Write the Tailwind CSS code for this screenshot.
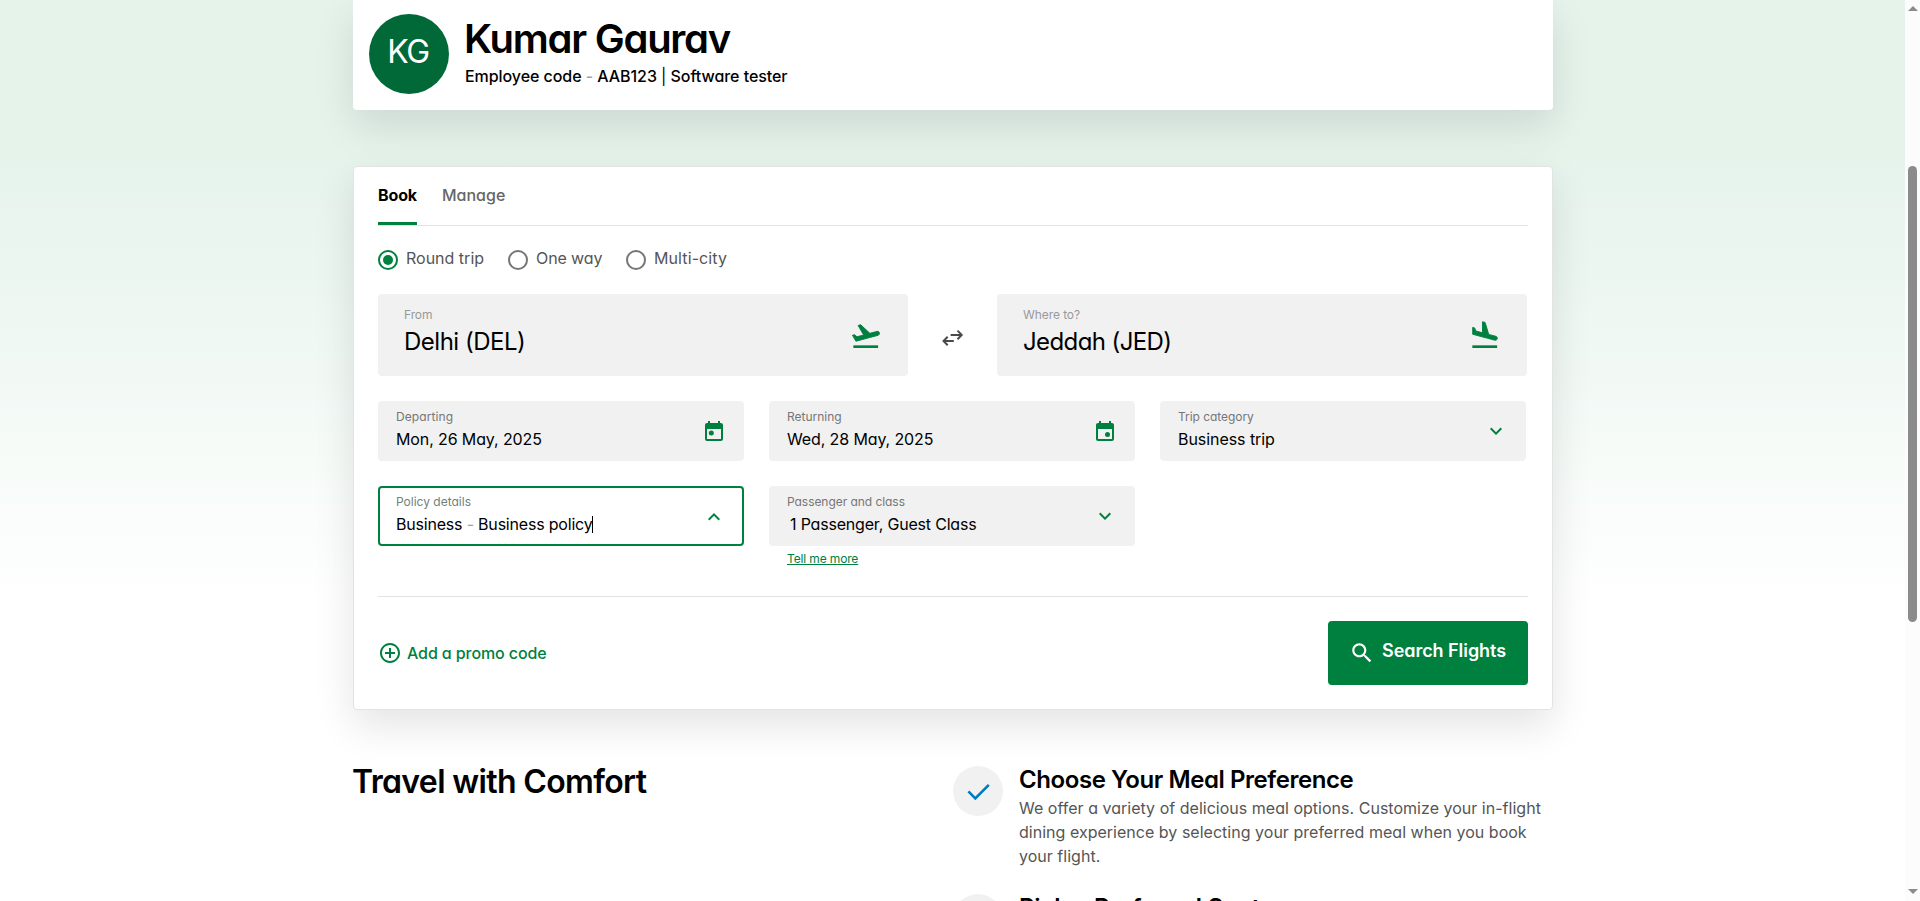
<!DOCTYPE html>
<html lang="en">
<head>
<meta charset="utf-8">
<title>Book a flight</title>
<script src="https://cdn.jsdelivr.net/npm/@tailwindcss/browser@4"></script>
</head>
<body class="h-[901px] overflow-hidden bg-white font-['Inter',sans-serif] [font-feature-settings:'cv11'] text-base text-black">
<div class="flex h-[901px] overflow-hidden">
  <main class="h-[901px] flex-1 overflow-hidden bg-[linear-gradient(180deg,#e5f3eb_0px,#e5f3eb_150px,#ffffff_610px)] pl-[353px]">
    <!-- Profile -->
    <header class="flex h-[110px] w-[1200px] gap-4 rounded-b bg-white pt-3.5 pl-4 shadow-[0_16px_40px_rgba(0,0,0,0.11)]">
      <div class="flex size-20 items-center justify-center rounded-full bg-[#006937] pr-0.5 pb-[5px] text-[32px] leading-10 tracking-[-1.4px] text-white">KG</div>
      <div>
        <h1 class="-ml-px pt-px text-[40px] leading-[48px] font-semibold tracking-[-1.25px] whitespace-nowrap">Kumar Gaurav</h1>
        <p class="mt-px font-medium tracking-[-0.06px]">Employee code <span class="text-neutral-400">-</span> AAB123 <span class="font-normal">|</span> Software tester</p>
      </div>
    </header>

    <!-- Booking card -->
    <section class="mt-14 h-[544px] w-[1200px] rounded border border-[#e2e4e3] bg-white px-6 shadow-[0_16px_40px_rgba(0,0,0,0.11)]">
      <nav class="flex h-[59px] gap-[25px] border-b border-[#e2e2e2] pt-4">
        <span class="h-[42px] w-[39px] border-b-[3px] border-[#00803e] font-bold tracking-[-0.12px]">Book</span>
        <span class="font-medium text-[#666]">Manage</span>
      </nav>

      <div class="flex h-[68px] pt-6 text-[#555]">
        <span class="flex w-[130px] gap-2"><span class="flex size-5 items-center justify-center rounded-full border-2 border-[#00803e]"><span class="size-2.5 rounded-full bg-[#00803e]"></span></span><span class="-mt-1">Round trip</span></span>
        <span class="flex w-[118px] gap-2"><span class="size-5 rounded-full border-2 border-[#767676]"></span><span class="-mt-1 tracking-[-0.1px]">One way</span></span>
        <span class="flex gap-2"><span class="size-5 rounded-full border-2 border-[#767676]"></span><span class="-mt-1 tracking-[0.1px]">Multi-city</span></span>
      </div>

      <div class="flex">
        <div class="flex h-[82px] w-[530px] justify-between rounded bg-[#f1f1f1] pt-[13px] pr-[26px] pl-[26px]">
          <div>
            <div class="text-xs leading-4 tracking-[-0.1px] text-[#999]">From</div>
            <div class="mt-[3px] text-2xl leading-8 tracking-[-0.5px]">Delhi (DEL)</div>
          </div>
          <svg class="mt-[13px] size-8 fill-[#00803e]" viewBox="0 0 24 24"><path d="M2.5 19h18.6v2H2.5z"/><path stroke="#00803e" stroke-width=".7" d="M22.07 9.64c-.21-.8-1.04-1.28-1.84-1.06L14.92 10l-6.9-6.43-1.93.51 4.14 7.17-4.97 1.33-1.97-1.54-1.45.39 1.82 3.16.77 1.33 1.6-.43 5.31-1.42 4.35-1.16L21 11.49c.81-.23 1.28-1.05 1.07-1.85z"/></svg>
        </div>
        <div class="flex w-[89px] justify-center pt-8">
          <svg class="h-6 w-6" viewBox="0 0 24 24" fill="none" stroke="#4a4a4a" stroke-width="2"><path d="M9.6 8.9h10.6M16.5 4.6l4.2 4.3-4.2 4.3M12.8 15H3M6.7 10.7 2.5 15l4.2 4.3"/></svg>
        </div>
        <div class="flex h-[82px] w-[530px] justify-between rounded bg-[#f1f1f1] pt-[13px] pr-[26px] pl-[26px]">
          <div>
            <div class="text-xs leading-4 tracking-[-0.08px] text-[#999]">Where to?</div>
            <div class="mt-[3px] text-2xl leading-8 tracking-[-0.6px]">Jeddah (JED)</div>
          </div>
          <svg class="mt-[13px] size-8 fill-[#00803e]" viewBox="0 0 24 24"><path d="M2.5 19h18.6v2H2.5z"/><path transform="translate(0 -.7)" stroke="#00803e" stroke-width=".7" d="M9.68 13.27l4.35 1.16 5.31 1.42c.8.21 1.62-.26 1.84-1.06.21-.8-.26-1.62-1.06-1.84l-5.31-1.42-2.76-9.02L10.12 2v8.28L5.15 8.95l-.93-2.32-1.45-.39v5.17l1.6.43 5.31 1.43z"/></svg>
        </div>
      </div>

      <div class="mt-[25px] grid grid-cols-[366px_366px_366px] gap-[25px]">
        <div class="flex h-[60px] justify-between rounded bg-[#f1f1f1] pt-2 pr-[18px] pl-[18px]">
          <div>
            <div class="text-xs leading-4 tracking-[0.1px] text-[#767676]">Departing</div>
            <div class="mt-0.5 leading-6 tracking-[-0.12px]">Mon, 26 May, 2025</div>
          </div>
          <svg class="mt-[11px] size-6 fill-[#00803e]" viewBox="0 0 24 24"><path d="M19 3h-1V1h-2v2H8V1H6v2H5c-1.11 0-1.99.9-1.99 2L3 19c0 1.1.89 2 2 2h14c1.1 0 2-.9 2-2V5c0-1.1-.9-2-2-2zm0 16H5V9h14v10z"/><circle cx="9.3" cy="13" r="2.5"/></svg>
        </div>
        <div class="flex h-[60px] justify-between rounded bg-[#f1f1f1] pt-2 pr-[18px] pl-[18px]">
          <div>
            <div class="text-xs leading-4 text-[#767676]">Returning</div>
            <div class="mt-0.5 leading-6 tracking-[-0.12px]">Wed, 28 May, 2025</div>
          </div>
          <svg class="mt-[11px] size-6 fill-[#00803e]" viewBox="0 0 24 24"><path d="M19 3h-1V1h-2v2H8V1H6v2H5c-1.11 0-1.99.9-1.99 2L3 19c0 1.1.89 2 2 2h14c1.1 0 2-.9 2-2V5c0-1.1-.9-2-2-2zm0 16H5V9h14v10z"/><circle cx="14.5" cy="14.5" r="2.5"/></svg>
        </div>
        <div class="flex h-[60px] justify-between rounded bg-[#f1f1f1] pt-2 pr-[18px] pl-[18px]">
          <div>
            <div class="text-xs leading-4 tracking-[-0.05px] text-[#767676]">Trip category</div>
            <div class="mt-0.5 leading-6 tracking-[-0.06px]">Business trip</div>
          </div>
          <svg class="mt-2.5 size-6 fill-[#00803e]" viewBox="0 0 24 24"><path d="M16.59 8.59 12 13.17 7.41 8.59 6 10l6 6 6-6z"/></svg>
        </div>

        <div class="flex h-[60px] justify-between rounded border-2 border-[#00803e] bg-white pt-1.5 pr-4 pl-4">
          <div>
            <div class="text-xs leading-4 text-[#6f8279]">Policy details</div>
            <div class="mt-0.5 flex items-center leading-6 tracking-[-0.2px] whitespace-pre">Business <span class="text-neutral-400">-</span> Business policy<span class="h-[17px] w-px bg-black"></span></div>
          </div>
          <svg class="mt-[11px] size-6 fill-[#00803e]" viewBox="0 0 24 24"><path d="m12 8-6 6 1.41 1.41L12 10.83l4.59 4.58L18 14z"/></svg>
        </div>
        <div>
          <div class="flex h-[60px] justify-between rounded bg-[#f1f1f1] pt-2 pr-[18px] pl-[18px]">
            <div>
              <div class="text-xs leading-4 tracking-[-0.05px] text-[#767676]">Passenger and class</div>
              <div class="mt-0.5 pl-[3px] leading-6 tracking-[-0.19px]">1 Passenger, Guest Class</div>
            </div>
            <svg class="mt-2.5 size-6 fill-[#00803e]" viewBox="0 0 24 24"><path d="M16.59 8.59 12 13.17 7.41 8.59 6 10l6 6 6-6z"/></svg>
          </div>
          <a class="mt-[5px] ml-[18px] block text-xs leading-4 tracking-[-0.14px] text-[#00803e] underline">Tell me more</a>
        </div>
      </div>

      <div class="mt-[29px] flex justify-between border-t border-[#e2e2e2] pt-6">
        <div class="flex gap-[5px] pt-5 font-medium tracking-[-0.1px] text-[#00803e]">
          <svg class="size-6 fill-[#00803e]" viewBox="0 0 24 24"><path d="M13 7h-2v4H7v2h4v4h2v-4h4v-2h-4V7zm-1-5C6.48 2 2 6.48 2 12s4.48 10 10 10 10-4.48 10-10S17.52 2 12 2zm0 18c-4.41 0-8-3.59-8-8s3.59-8 8-8 8 3.59 8 8-3.59 8-8 8z"/></svg>
          <span>Add a promo code</span>
        </div>
        <button class="flex h-16 w-[200px] gap-[7px] rounded bg-[#00803e] pt-[19px] pl-[21px] text-lg leading-6 font-semibold text-white">
          <svg class="size-[26px] fill-white" viewBox="0 0 24 24"><path d="M15.5 14h-.79l-.28-.27C15.41 12.59 16 11.11 16 9.5 16 5.91 13.09 3 9.5 3S3 5.91 3 9.5 5.91 16 9.5 16c1.61 0 3.09-.59 4.23-1.57l.27.28v.79l5 4.99L20.49 19l-4.99-5zm-6 0C7.01 14 5 11.99 5 9.5S7.01 5 9.5 5 14 7.01 14 9.5 11.99 14 9.5 14z"/></svg>
          <span class="-mt-px tracking-[-0.05px] whitespace-nowrap">Search Flights</span>
        </button>
      </div>
    </section>

    <!-- Benefits -->
    <section class="mt-[52px] flex w-[1200px]">
      <h2 class="-ml-px w-[601px] text-[32px] leading-10 font-semibold tracking-[-0.65px]">Travel with Comfort</h2>
      <div class="flex flex-col pt-0.5">
        <div class="flex h-32 gap-4">
          <div class="mt-0.5 flex size-[50px] shrink-0 items-center justify-center rounded-full bg-[#f1f1f1]">
            <svg class="h-[50px] w-[50px]" viewBox="0 0 50 50" fill="none" stroke="#007ac2" stroke-width="2.6"><path d="m15.4 25.4 6.9 6.9L35.8 18.8"/></svg>
          </div>
          <div>
            <h3 class="text-2xl leading-8 font-semibold tracking-[-0.43px]">Choose Your Meal Preference</h3>
            <p class="leading-6 tracking-[0.02px] whitespace-nowrap text-[#555]">We offer a variety of delicious meal options. Customize your in-flight<br>dining experience by selecting your preferred meal when you book<br>your flight.</p>
          </div>
        </div>
        <div class="flex gap-4">
          <div class="mt-0.5 size-[50px] shrink-0 rounded-full bg-[#f1f1f1]"></div>
          <h3 class="text-2xl leading-8 font-semibold tracking-[-0.2px]">Pick a Preferred Seat</h3>
        </div>
      </div>
    </section>
  </main>

  <!-- Scrollbar -->
  <aside class="flex h-[901px] w-[15px] flex-col items-center bg-[#fcfcfc] pt-1.5">
    <svg class="h-[5px] w-2.5 fill-[#8b8b8b]" viewBox="0 0 10 5"><path d="M5 0l5 5H0z"/></svg>
    <div class="mt-[155px] h-[456px] w-[9px] rounded-full bg-[#8b8b8b]"></div>
    <svg class="mt-[267px] h-[5px] w-2.5 fill-[#8b8b8b]" viewBox="0 0 10 5"><path d="M0 0h10L5 5z"/></svg>
  </aside>
</div>
</body>
</html>
